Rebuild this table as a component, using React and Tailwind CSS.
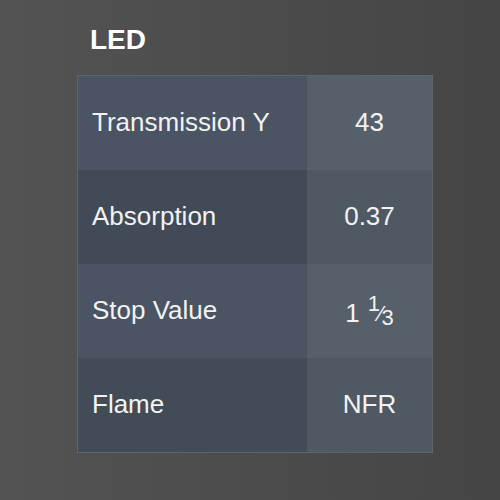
const Third = () => (
  <span className="ml-[8px] text-[22px]">
    <span className="align-[11px]">1</span>
    <span className="-ml-[1px] align-[1px]">⁄</span>
    <span className="-ml-[1px] align-[-3px]">3</span>
  </span>
);

const rows = [
  { label: "Transmission Y", value: "43", left: "bg-[#4a5462]", right: "bg-[#56606b]" },
  { label: "Absorption", value: "0.37", left: "bg-[#414b57]", right: "bg-[#4f5964]" },
  { label: "Stop Value", value: <span>1<Third /></span>, left: "bg-[#4a5462]", right: "bg-[#56606b]" },
  { label: "Flame", value: "NFR", left: "bg-[#424c58]", right: "bg-[#4f5964]" },
];

export default function App() {
  return (
    <div className="h-[500px] w-[500px] bg-gradient-to-r from-[#535353] to-[#454545] pl-[77px] pt-[26px] font-['Liberation_Sans',Arial,sans-serif] text-[#f2f2f2]">
      <h2 className="pl-[13px] text-[28px] font-bold leading-none text-white">LED</h2>

      {/* spec table */}
      <div className="mt-[21px] w-[356px] border border-[#5f656c]">
        {rows.map((r) => (
          <div key={r.label} className="flex h-[94px]">
            <div className={`flex w-[229px] items-center pl-[14px] pb-[2px] text-[26px] ${r.left}`}>
              {r.label}
            </div>
            <div className={`flex flex-1 items-center justify-center pb-[2px] text-[26px] ${r.right}`}>
              {r.value}
            </div>
          </div>
        ))}
      </div>
    </div>
  );
}
